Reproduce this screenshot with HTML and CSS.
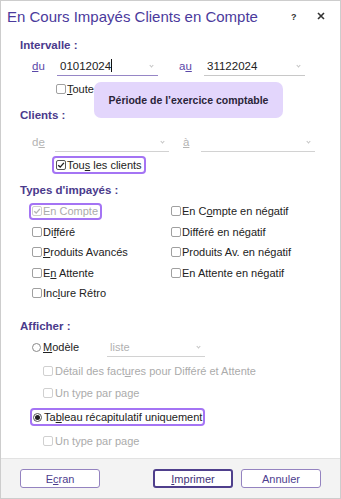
FILE: index.html
```html
<!DOCTYPE html>
<html lang="fr">
<head>
<meta charset="utf-8">
<title>En Cours Impayés Clients en Compte</title>
<link rel="stylesheet" href="styles.css">
</head>
<body>
<div class="win">
  <header class="titlebar">
    <span class="title">En Cours Impayés Clients en Compte</span>
    <span class="tb-help">?</span>
    <span class="tb-close"><svg width="8" height="8" viewBox="0 0 8 8"><path d="M1 1L7 7M7 1L1 7" stroke="#333" stroke-width="1.6" fill="none"/></svg></span>
  </header>

  <main class="content">
    <div class="sec sec-intervalle">Intervalle :</div>
    <div class="range range-du">
      <span class="rlbl"><u>d</u>u</span>
      <div class="field field-focus"><span class="val">01012024</span><span class="caret"></span><span class="chev"></span></div>
      <span class="rlbl rlbl-2"><span>a</span><u>u</u></span>
      <div class="field"><span class="val">31122024</span><span class="chev"></span></div>
    </div>
    <div class="row row-toute"><span class="cb"></span><span class="txt"><u>T</u>oute</span></div>

    <div class="sec sec-clients">Clients :</div>
    <div class="range range-de">
      <span class="rlbl dis">d<u>e</u></span>
      <div class="field field-dis"><span class="val"></span><span class="chev"></span></div>
      <span class="rlbl rlbl-2 dis"><u>à</u></span>
      <div class="field field-dis"><span class="val"></span><span class="chev"></span></div>
    </div>
    <div class="row row-tous">
      <span class="focusbox"><span class="cb cb-on"><svg width="8" height="8" viewBox="0 0 8 8"><path d="M1.2 4.2L3.2 6.1L6.9 1.9" stroke="#222" stroke-width="1.4" fill="none"/></svg></span><span class="txt">Tou<u>s</u> les clients</span></span>
    </div>

    <div class="sec sec-types">Types d'impayés :</div>
    <div class="types">
      <div class="row cell"><span class="focusbox fb-types"><span class="cb cb-dis"><svg width="8" height="8" viewBox="0 0 8 8"><path d="M1.2 4.2L3.2 6.1L6.9 1.9" stroke="#b5b5b5" stroke-width="1.4" fill="none"/></svg></span><span class="txt dis">En Compte</span></span></div>
      <div class="row cell"><span class="cb"></span><span class="txt">En C<u>o</u>mpte en négatif</span></div>
      <div class="row cell"><span class="cb"></span><span class="txt">Di<u>f</u>féré</span></div>
      <div class="row cell"><span class="cb"></span><span class="txt">Différé en négatif</span></div>
      <div class="row cell"><span class="cb"></span><span class="txt"><u>P</u>roduits Avancés</span></div>
      <div class="row cell"><span class="cb"></span><span class="txt">Produits Av. en négatif</span></div>
      <div class="row cell"><span class="cb"></span><span class="txt">E<u>n</u> Attente</span></div>
      <div class="row cell"><span class="cb"></span><span class="txt">En Attente en négatif</span></div>
      <div class="row cell"><span class="cb"></span><span class="txt">Inc<u>l</u>ure Rétro</span></div>
    </div>

    <div class="sec sec-afficher">Afficher :</div>
    <div class="row row-modele">
      <span class="rb"></span><span class="txt"><u>M</u>odèle</span>
      <div class="field field-dis field-liste"><span class="val">liste</span><span class="chev"></span></div>
    </div>
    <div class="row row-sub row-detail"><span class="cb cb-dis"></span><span class="txt dis">Détail des fact<u>u</u>res pour Différé et Attente</span></div>
    <div class="row row-sub row-type1"><span class="cb cb-dis"></span><span class="txt dis">Un type par page</span></div>
    <div class="row row-tableau">
      <span class="focusbox fb-tableau"><span class="rb rb-on"></span><span class="txt">Ta<u>b</u>leau récapitulatif uniquement</span></span>
    </div>
    <div class="row row-sub row-type2"><span class="cb cb-dis"></span><span class="txt dis">Un type par page</span></div>
  </main>

  <footer class="footer">
    <button class="btn">E<u>c</u>ran</button>
    <button class="btn btn-default"><u>I</u>mprimer</button>
    <button class="btn">Annuler</button>
  </footer>

  <div class="tooltip">Période de l’exercice comptable</div>
</div>
</body>
</html>
```

FILE: styles.css
```css
* { box-sizing: border-box; }
html, body { margin: 0; padding: 0; background: #fff; }
body {
  font-family: "Liberation Sans", Arial, sans-serif;
  font-size: 11px;
  color: #222;
}
u { text-decoration: underline; text-underline-offset: 1px; }

.win {
  position: relative;
  width: 341px;
  height: 499px;
  border: 1px solid #cdcdcd;
  display: flex;
  flex-direction: column;
  background: #fff;
}

/* title bar */
.titlebar {
  height: 29px;
  display: flex;
  align-items: center;
  padding-left: 6px;
  padding-top: 1px;
}
.title {
  flex: 1;
  font-size: 15px;
  color: #4b3a9c;
}
.tb-help {
  font-size: 9px;
  font-weight: bold;
  color: #333;
  width: 10px;
  margin-right: 16px;
  padding-top: 2px;
}
.tb-close {
  width: 8px;
  height: 8px;
  margin-right: 15px;
  display: flex;
}

/* content */
.content {
  flex: 1;
  padding-left: 19px;
}
.sec {
  font-weight: bold;
  font-size: 11.5px;
  color: #4a3a8c;
  height: 16px;
  line-height: 16px;
}
.sec-intervalle { margin-top: 7px; }
.sec-clients { margin-top: 9px; }
.sec-types { margin-top: 8px; }
.sec-afficher { margin-top: 14.5px; }

/* from / to rows */
.range {
  display: grid;
  height: 20px;
  align-items: stretch;
  padding-left: 12px;
}
.rlbl-2 { grid-column: 4; }
.range-du {
  margin-top: 3px;
  grid-template-columns: 25px 101px 21px 25px 101px;
}
.range-de {
  margin-top: 9px;
  grid-template-columns: 23px 114px 14px 18px 114px;
}
.rlbl {
  display: flex;
  align-items: center;
  color: #5a48a8;
  font-size: 11.5px;
}
.rlbl.dis { color: #b4b4b4; }

.field {
  display: flex;
  align-items: center;
  border-bottom: 1px solid #c8c8c8;
  padding-left: 3px;
  padding-right: 5px;
  font-size: 11.5px;
  color: #222;
}
.field-focus { border-bottom-color: #9686c6; }
.field-dis { border-bottom-color: #d2d2d2; color: #b0b0b0; }
.field .val { flex: 0 0 auto; }
.caret {
  width: 1px;
  height: 13px;
  background: #111;
}
.chev {
  margin-left: auto;
  width: 3px;
  height: 3px;
  border-right: 1px solid #c4c4c4;
  border-bottom: 1px solid #c4c4c4;
  transform: rotate(45deg);
  margin-top: 0;
}

/* checkbox rows */
.row {
  display: flex;
  align-items: center;
}
.cb {
  width: 10px;
  height: 10px;
  border: 1px solid #a0a0a0;
  border-radius: 2px;
  background: #fff;
  margin-right: 1px;
  display: flex;
  align-items: center;
  justify-content: center;
  flex: 0 0 auto;
}
.cb-on { border-color: #555; }
.cb-dis { border-color: #d0d0d0; }
.txt { white-space: nowrap; }
.txt.dis { color: #ababab; }

.rb {
  width: 9px;
  height: 9px;
  border: 1px solid #8a8a8a;
  border-radius: 50%;
  margin-right: 2px;
  flex: 0 0 auto;
  display: flex;
  align-items: center;
  justify-content: center;
  background: #fff;
}
.rb-on { border-color: #555; }
.rb-on::after {
  content: "";
  width: 5px;
  height: 5px;
  border-radius: 50%;
  background: #222;
}

.focusbox {
  display: inline-flex;
  align-items: center;
  border: 2px solid #a474f4;
  border-radius: 4px;
  padding: 0 2px 0 2px;
  height: 18px;
}

.row-toute {
  margin-top: 4px;
  height: 18px;
  padding-left: 36px;
}
.row-tous {
  margin-top: 3px;
  height: 19px;
  padding-left: 32px;
}

.types {
  margin-top: 3px;
  display: grid;
  grid-template-columns: 139px 1fr;
  grid-auto-rows: 20.5px;
  padding-left: 12px;
}
.cell { height: 20.5px; }
.fb-types {
  margin-left: -3px;
  padding: 0 2px 0 1px;
  height: 17px;
}

.row-modele {
  margin-top: 3px;
  height: 20px;
  padding-left: 12px;
}
.row-modele .txt { width: 64px; }
.field-liste {
  width: 98px;
  height: 20px;
  font-size: 11px;
}
.row-sub {
  height: 20px;
  padding-left: 23px;
}
.row-sub .cb { margin-right: 2px; }
.row-detail { margin-top: 4px; }
.row-type1 { margin-top: 2px; }
.row-tableau {
  margin-top: 5px;
  height: 18px;
  padding-left: 10px;
}
.fb-tableau { padding: 0 1px 0 1px; height: 18px; }
.row-type2 { margin-top: 5px; }

/* footer */
.footer {
  height: 40px;
  flex: 0 0 auto;
  background: #f3f3f3;
  border-top: 1px solid #e2e2e2;
  display: flex;
  align-items: flex-start;
  padding: 10px 19px 0 19px;
}
.btn {
  width: 80px;
  height: 19px;
  background: #fff;
  border: 1px solid #9483c0;
  border-radius: 3px;
  font-family: "Liberation Sans", Arial, sans-serif;
  font-size: 11px;
  color: #4d3d8e;
  padding: 0;
}
.btn-default {
  margin-left: auto;
  margin-right: 8px;
  border: 2px solid #4f3f8c;
  color: #3f3278;
}

/* tooltip */
.tooltip {
  position: absolute;
  left: 93px;
  top: 81px;
  width: 189px;
  height: 36px;
  background: #e3d6fc;
  border-radius: 7px;
  display: flex;
  align-items: center;
  justify-content: center;
  font-weight: bold;
  font-size: 10.5px;
  color: #2a2438;
}
```
